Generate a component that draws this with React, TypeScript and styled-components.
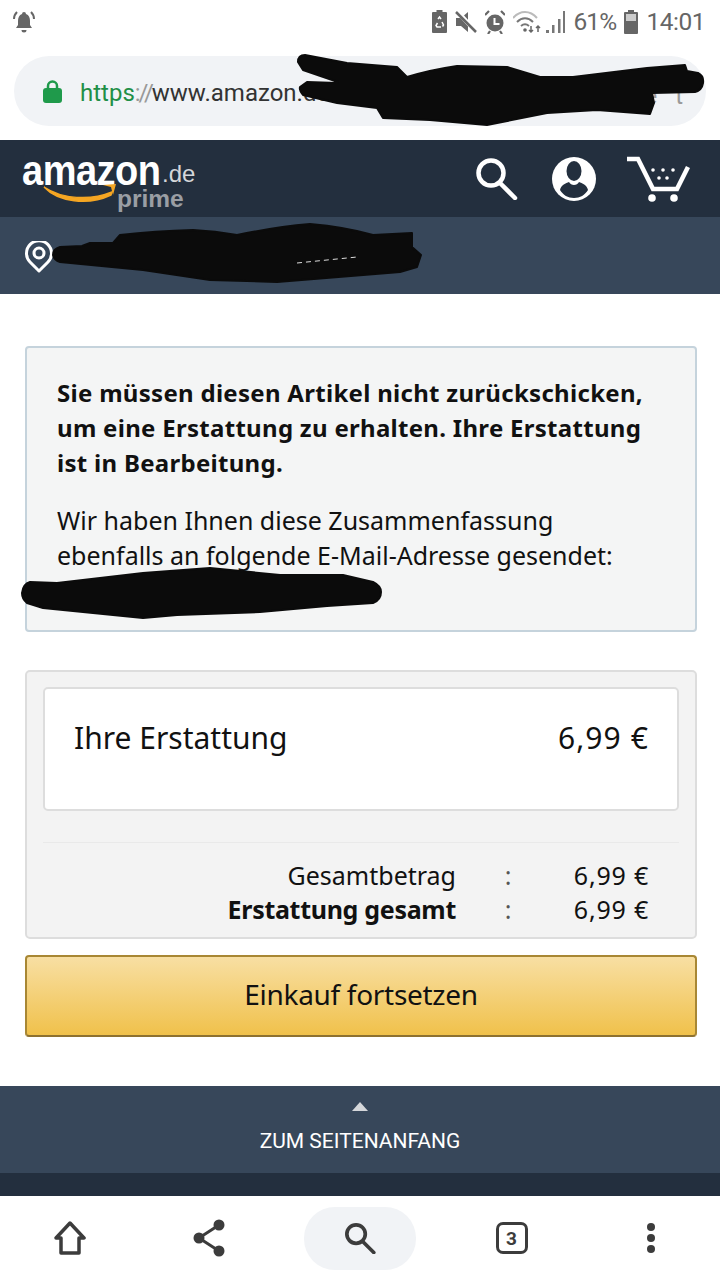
import { createGlobalStyle, styled } from "styled-components";

const GlobalStyle = createGlobalStyle`
  html, body { margin: 0; padding: 0; background: #fff; }
  * { box-sizing: border-box; }
  body { font-family: "Noto Sans", "Liberation Sans", sans-serif; color: #111; }
`;

const Screen = styled.div`
  position: relative;
  width: 720px;
  height: 1280px;
  overflow: hidden;
  display: flex;
  flex-direction: column;
  background: #fff;
`;

const StatusBar = styled.div`
  height: 40px;
  padding: 3px 15px 0 11px;
  display: flex;
  align-items: center;
  justify-content: space-between;
  color: #666;
  font-family: Roboto, sans-serif;
  font-size: 24.5px;
`;

const StatusRight = styled.div`
  display: flex;
  align-items: center;
  gap: 8px;
`;

const StatusText = styled.span<{ $spacing: number }>`
  letter-spacing: ${(p) => p.$spacing}px;
`;

const UrlArea = styled.div`
  height: 100px;
  padding: 16px 14px 14px;
`;

const UrlPill = styled.div`
  height: 70px;
  border-radius: 35px;
  background: #f1f3f6;
  display: flex;
  align-items: center;
  padding: 0 17px 0 29px;
  gap: 18px;
  font-family: Roboto, sans-serif;
  font-size: 24px;
  color: #333;
`;

const UrlText = styled.span`
  padding-top: 4px;
`;

const Https = styled.span`
  color: #1f8f47;
`;

const Slashes = styled.span`
  color: #999;
  letter-spacing: -2px;
`;

const UrlTail = styled.span`
  margin-left: auto;
  padding-top: 10px;
  color: #9a9a9a;
  letter-spacing: 6px;
`;

const Header = styled.header`
  height: 77px;
  background: #232f3e;
  display: flex;
  align-items: flex-start;
  justify-content: space-between;
  padding: 0 30px 0 22px;
`;

const Logo = styled.div`
  position: relative;
  width: 180px;
  height: 77px;
`;

const LogoWord = styled.span`
  position: absolute;
  left: 0;
  top: 16px;
  color: #fff;
  font-family: "Liberation Sans", sans-serif;
  font-weight: 700;
  font-size: 38px;
  line-height: 28px;
  letter-spacing: -0.5px;
  transform: scaleY(1.13);
`;

const LogoTld = styled.span`
  position: absolute;
  left: 140px;
  top: 19px;
  color: #d5d7da;
  font-family: "Liberation Sans", sans-serif;
  font-size: 24px;
  line-height: 30px;
`;

const LogoPrime = styled.span`
  position: absolute;
  left: 95px;
  top: 47px;
  color: #9a9ea4;
  font-family: "Liberation Sans", sans-serif;
  font-weight: 700;
  font-size: 24.5px;
  line-height: 24px;
`;

const LogoSmile = styled.svg`
  position: absolute;
  left: 20px;
  top: 42px;
`;

const HeaderIcons = styled.div`
  display: flex;
  align-items: center;
  gap: 30px;
  padding-top: 16px;
`;

const HeaderSearch = styled.div`
  display: flex;
  margin-right: 4px;
`;

const LocationBar = styled.div`
  height: 77px;
  background: #37475a;
  display: flex;
  align-items: center;
  padding: 4px 0 0 24px;
`;

const Main = styled.main`
  flex: 1;
  padding: 52px 23px 0 25px;
  display: flex;
  flex-direction: column;
`;

const InfoBox = styled.section`
  height: 286px;
  background: #f4f5f5;
  border: 2px solid #c5d3dc;
  border-radius: 4px;
  padding: 27px 46px 0 30px;
  line-height: 35px;
`;

const InfoStrong = styled.p`
  margin: 0 0 23px;
  font-size: 24px;
  font-weight: 700;
  letter-spacing: 0.29px;
`;

const InfoText = styled.p`
  margin: 0;
  font-size: 25px;
`;

const SummaryBox = styled.section`
  margin-top: 38px;
  height: 269px;
  background: #f3f3f3;
  border: 2px solid #ddd;
  border-radius: 5px;
  padding: 15px 16px 0;
`;

const RefundCard = styled.div`
  height: 124px;
  background: #fff;
  border: 2px solid #ddd;
  border-radius: 5px;
  padding: 27px 28px 0 29px;
  display: flex;
  justify-content: space-between;
  font-size: 30px;
  line-height: 44px;
`;

const RefundAmount = styled.span`
  letter-spacing: 1.1px;
`;

const Divider = styled.hr`
  margin: 31px 0 0;
  border: 0;
  border-top: 1px solid #e9e9e9;
`;

const Totals = styled.div`
  padding-top: 15px;
  font-size: 25px;
  line-height: 34px;
`;

const TotalRow = styled.div<{ $bold?: boolean }>`
  display: grid;
  grid-template-columns: 413px 104px 89px;
  font-weight: ${(p) => (p.$bold ? 700 : 400)};
  letter-spacing: ${(p) => (p.$bold ? "-0.3px" : "0")};
`;

const TotalLabel = styled.span`
  text-align: right;
`;

const TotalColon = styled.span`
  text-align: center;
  font-weight: 400;
  color: #555;
`;

const TotalValue = styled.span`
  text-align: right;
  font-weight: 400;
  letter-spacing: 0.8px;
`;

const ContinueButton = styled.button`
  margin-top: 16px;
  height: 82px;
  width: 100%;
  padding: 0 0 4px;
  border: 2px solid #a88734;
  border-bottom-color: #8d7130;
  border-radius: 4px;
  background: linear-gradient(to bottom, #f8dfa3, #f0c14b);
  color: #111;
  font-family: inherit;
  font-size: 28px;
  letter-spacing: -0.3px;
`;

const BackToTop = styled.div`
  height: 87px;
  background: #37475a;
  color: #fff;
  display: flex;
  flex-direction: column;
  align-items: center;
  padding-top: 16px;
  font-family: Roboto, sans-serif;
  font-size: 21px;
`;

const Caret = styled.div`
  width: 0;
  height: 0;
  border-left: 8px solid transparent;
  border-right: 8px solid transparent;
  border-bottom: 9px solid #d5d7da;
  margin-bottom: 18px;
`;

const FooterStrip = styled.div`
  height: 23px;
  background: #232f3e;
`;

const BottomNav = styled.nav`
  height: 84px;
  background: #fff;
  display: grid;
  grid-template-columns: 139px 139px 164px 139px 139px;
  align-items: center;
  justify-items: center;
`;

const SearchPill = styled.div`
  width: 112px;
  height: 63px;
  border-radius: 31px;
  background: #f1f3f6;
  display: flex;
  align-items: center;
  justify-content: center;
`;

const TabCount = styled.div`
  width: 32px;
  height: 32px;
  border: 3px solid #3c3c3c;
  border-radius: 7px;
  color: #3c3c3c;
  display: flex;
  align-items: center;
  justify-content: center;
  font-family: Roboto, sans-serif;
  font-size: 19px;
  font-weight: 700;
`;

const Scribble = styled.svg<{ $left: number; $top: number }>`
  position: absolute;
  left: ${(p) => p.$left}px;
  top: ${(p) => p.$top}px;
  fill: #0b0b0b;
  stroke: #0b0b0b;
  stroke-width: 2px;
  stroke-linejoin: round;
`;

const BellIcon = () => (
  <svg width="26" height="26" viewBox="0 0 26 26" fill="#666">
    <path d="M13 3a2 2 0 0 1 2 2c3 1 4 4 4 7v4l2 3H5l2-3v-4c0-3 1-6 4-7a2 2 0 0 1 2-2zM10.500 21h5a2.500 2.500 0 0 1-5 0z" />
    <path d="M6 3C4 5 3 7 3 10M20 3c2 2 3 4 3 7" fill="none" stroke="#666" strokeWidth="2" />
  </svg>
);

const RecycleBatteryIcon = () => (
  <svg width="15" height="23" viewBox="0 0 15 23">
    <path d="M4.500 0h6v2H14a1 1 0 0 1 1 1v19a1 1 0 0 1-1 1H1a1 1 0 0 1-1-1V3a1 1 0 0 1 1-1h3.500z" fill="#666" />
    <path d="M6 9l1.500-2 1.500 2M10 12l1.500 3-1 1.500M9 17H5l-1-1.500L5.500 13" stroke="#fff" strokeWidth="1.500" fill="none" />
  </svg>
);

const MuteIcon = () => (
  <svg width="22" height="22" viewBox="0 0 22 22" fill="#666">
    <path d="M1 7h5l7-6v20l-7-6H1z" />
    <path d="M2 0l20 22" stroke="#fff" strokeWidth="4.500" />
    <path d="M1 1l20 20" stroke="#666" strokeWidth="2.500" />
  </svg>
);

const AlarmIcon = () => (
  <svg width="20" height="24" viewBox="0 0 20 24">
    <circle cx="10" cy="13" r="8.500" fill="#666" />
    <path d="M9.500 8v6h5" stroke="#fff" strokeWidth="2" fill="none" />
    <path d="M0 5l4-4M20 5l-4-4M5 21l-2 3M15 21l2 3" stroke="#666" strokeWidth="2.200" />
  </svg>
);

const WifiSignalIcon = () => (
  <svg width="52" height="24" viewBox="0 0 52 24" fill="none">
    <path d="M0 8c7-8 17-8 24 0" stroke="#bbb" strokeWidth="2" />
    <path d="M4 12c5-5 11-5 16 0" stroke="#777" strokeWidth="2" />
    <path d="M8 16c3-2.500 5-2.500 8 0" stroke="#777" strokeWidth="2" />
    <circle cx="12" cy="20" r="1.800" fill="#666" />
    <path d="M18 16v6M16 20l2 2 2-2M25 22v-6M23 18l2-2 2 2" stroke="#666" strokeWidth="1.500" />
    <g fill="#777">
      <rect x="33" y="20" width="3" height="3" />
      <rect x="39" y="15" width="2.500" height="8" />
      <rect x="45" y="9" width="2.500" height="14" />
      <rect x="50" y="1" width="2" height="22" />
    </g>
  </svg>
);

const BatteryIcon = () => (
  <svg width="14" height="24" viewBox="0 0 14 24">
    <path d="M4 0h6v2h3a1 1 0 0 1 1 1v20a1 1 0 0 1-1 1H1a1 1 0 0 1-1-1V3a1 1 0 0 1 1-1h3z" fill="#666" />
    <rect x="2" y="4" width="10" height="7" fill="#ccc" />
  </svg>
);

const LockIcon = () => (
  <svg width="19" height="24" viewBox="0 0 19 24">
    <path d="M5 10V7a4.500 4.500 0 0 1 9 0v3" fill="none" stroke="#1f9a4b" strokeWidth="2.500" />
    <rect x="0" y="9" width="19" height="15" rx="3" fill="#1f9a4b" />
  </svg>
);

const SearchIcon = ({ size, color, stroke }: { size: number; color: string; stroke: number }) => (
  <svg width={size} height={size} viewBox="0 0 42 42" fill="none" stroke={color} strokeWidth={stroke}>
    <circle cx="15" cy="15" r="12.500" />
    <path d="M24 25l15 15" strokeLinecap="round" />
  </svg>
);

const AccountIcon = () => (
  <svg width="44" height="44" viewBox="0 0 44 44">
    <circle cx="22" cy="22" r="22" fill="#fff" />
    <ellipse cx="22" cy="14" rx="7.500" ry="10" fill="#232f3e" />
    <path d="M8 33c1-5 6-7 9-8 1 2 3 3 5 3s4-1 5-3c3 1 8 3 9 8-3 5-8 8-14 8S11 38 8 33z" fill="#232f3e" />
  </svg>
);

const CartIcon = () => (
  <svg width="64" height="46" viewBox="0 0 64 46" fill="none">
    <path d="M1 3h11l15 30h24l11-22" stroke="#fff" strokeWidth="4.500" />
    <circle cx="26" cy="42" r="3.800" fill="#fff" />
    <circle cx="48" cy="42" r="3.800" fill="#fff" />
    <g fill="#fff">
      <circle cx="27" cy="14" r="1.800" /><circle cx="37" cy="14" r="1.800" /><circle cx="47" cy="14" r="1.800" />
      <circle cx="33" cy="22" r="1.800" /><circle cx="41" cy="22" r="1.800" />
    </g>
  </svg>
);

const PinIcon = () => (
  <svg width="30" height="33" viewBox="0 0 30 33" fill="none" stroke="#fff" strokeWidth="3">
    <path d="M15 30L6 21a12.500 12.500 0 1 1 18 0z" strokeLinejoin="round" />
    <circle cx="15" cy="12" r="5" />
  </svg>
);

const HomeIcon = () => (
  <svg width="32" height="34" viewBox="0 0 32 34" fill="none" stroke="#3c3c3c" strokeWidth="3.500" strokeLinejoin="round">
    <path d="M2 17L16 2l14 15h-5v15H7V17z" />
  </svg>
);

const ShareIcon = () => (
  <svg width="34" height="38" viewBox="0 0 34 38" fill="#3c3c3c">
    <path d="M27 6L7 19l20 13" fill="none" stroke="#3c3c3c" strokeWidth="3" />
    <circle cx="27" cy="6" r="5.500" />
    <circle cx="7" cy="19" r="5.500" />
    <circle cx="27" cy="32" r="5.500" />
  </svg>
);

const MenuIcon = () => (
  <svg width="10" height="30" viewBox="0 0 10 30" fill="#3c3c3c">
    <circle cx="5" cy="4" r="4" />
    <circle cx="5" cy="15" r="4" />
    <circle cx="5" cy="26" r="4" />
  </svg>
);

export default function App() {
  return (
    <>
      <GlobalStyle />
      <Screen>
        <StatusBar>
          <BellIcon />
          <StatusRight>
            <RecycleBatteryIcon />
            <MuteIcon />
            <AlarmIcon />
            <WifiSignalIcon />
            <StatusText $spacing={-0.8}>61%</StatusText>
            <BatteryIcon />
            <StatusText $spacing={-0.5}>14:01</StatusText>
          </StatusRight>
        </StatusBar>

        <UrlArea>
          <UrlPill>
            <LockIcon />
            <UrlText>
              <Https>https</Https>
              <Slashes>://</Slashes>www.amazon.de
            </UrlText>
            <UrlTail>e t</UrlTail>
          </UrlPill>
        </UrlArea>

        <Header>
          <Logo>
            <LogoWord>amazon</LogoWord>
            <LogoTld>.de</LogoTld>
            <LogoSmile width="80" height="24" viewBox="0 0 80 24">
              <path d="M2 5c18 12 46 14 68 5l-1 3C46 24 16 20 2 5z" fill="#f5a623" stroke="#f5a623" strokeWidth="1.500" />
              <path d="M61 3l13-1-3 11-2-8z" fill="#f5a623" />
            </LogoSmile>
            <LogoPrime>prime</LogoPrime>
          </Logo>
          <HeaderIcons>
            <HeaderSearch>
              <SearchIcon size={42} color="#fff" stroke={4.5} />
            </HeaderSearch>
            <AccountIcon />
            <CartIcon />
          </HeaderIcons>
        </Header>

        <LocationBar>
          <PinIcon />
        </LocationBar>

        <Main>
          <InfoBox>
            <InfoStrong>
              Sie müssen diesen Artikel nicht zurückschicken, um eine Erstattung zu erhalten. Ihre Erstattung ist in
              Bearbeitung.
            </InfoStrong>
            <InfoText>Wir haben Ihnen diese Zusammenfassung ebenfalls an folgende E-Mail-Adresse gesendet:</InfoText>
          </InfoBox>

          <SummaryBox>
            <RefundCard>
              <span>Ihre Erstattung</span>
              <RefundAmount>6,99 €</RefundAmount>
            </RefundCard>
            <Divider />
            <Totals>
              <TotalRow>
                <TotalLabel>Gesamtbetrag</TotalLabel>
                <TotalColon>:</TotalColon>
                <TotalValue>6,99 €</TotalValue>
              </TotalRow>
              <TotalRow $bold>
                <TotalLabel>Erstattung gesamt</TotalLabel>
                <TotalColon>:</TotalColon>
                <TotalValue>6,99 €</TotalValue>
              </TotalRow>
            </Totals>
          </SummaryBox>

          <ContinueButton>Einkauf fortsetzen</ContinueButton>
        </Main>

        <BackToTop>
          <Caret />
          ZUM SEITENANFANG
        </BackToTop>
        <FooterStrip />

        <BottomNav>
          <HomeIcon />
          <ShareIcon />
          <SearchPill>
            <SearchIcon size={31} color="#3c3c3c" stroke={5} />
          </SearchPill>
          <TabCount>3</TabCount>
          <MenuIcon />
        </BottomNav>

        {/* hand-drawn black redactions over the url, address and e-mail; viewBox uses page coordinates */}
        <Scribble $left={296} $top={52} width="412" height="76" viewBox="296 52 412 76">
          <path d="M298 62Q298 55 305 55L347 63L397 67L407 77Q430 70 457 66L507 67L540 77L573 77L647 68L685 65L687 71L698 73Q704 76 703 83Q702 90 695 92L652 93L654 103L650 114L597 110L547 113L487 125L430 120L383 118L377 108L337 103L303 95Q299 90 300 87L307 82L337 83L338 82L303 70z" />
        </Scribble>
        <Scribble $left={50} $top={222} width="374" height="62" viewBox="50 222 374 62">
          <path d="M53 255Q53 249 60 247L82 246L90 243L113 243L120 235Q155 231 193 230Q215 231 237 235Q275 227 310 224Q345 227 373 235L412 233L412 247L421 255L417 267L400 272L277 282L210 280L143 270L60 262Q54 260 53 255z" />
          <path d="M297 263L357 257" stroke="#ddd" strokeWidth="1" strokeDasharray="5 4" />
        </Scribble>
        <Scribble $left={20} $top={566} width="364" height="54" viewBox="20 566 364 54">
          <path d="M22 593Q23 584 30 582L57 583L143 573L210 568L280 575L343 575L373 582Q381 586 381 592Q381 600 373 603L327 606L260 612L177 615L143 618L43 608L27 603Q22 599 22 593z" />
        </Scribble>
      </Screen>
    </>
  );
}
